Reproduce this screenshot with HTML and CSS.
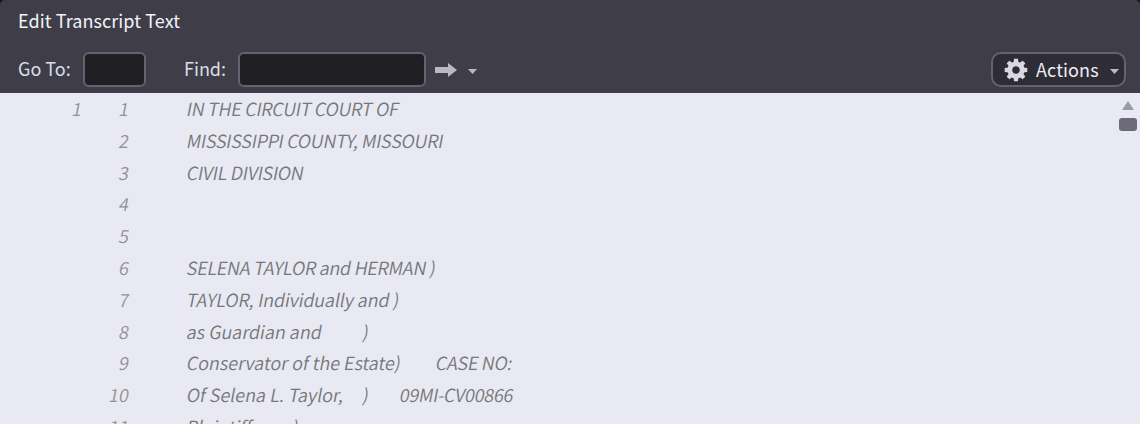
FILE: index.html
```
<!DOCTYPE html>
<html lang="en">
<head>
<meta charset="utf-8">
<title>Edit Transcript Text</title>
<link rel="stylesheet" href="styles.css">
</head>
<body>
<div class="window">
  <header class="header">
    <h1 class="title">Edit Transcript Text</h1>
    <div class="toolbar">
      <label class="label" for="goto">Go To:</label>
      <input class="field field-goto" id="goto" type="text">
      <label class="label label-find" for="find">Find:</label>
      <input class="field field-find" id="find" type="text">
      <svg class="arrow" width="22" height="14" viewBox="0 0 22 14"><path d="M0 4H13V0L22 7L13 14V10H0Z"/></svg>
      <svg class="caret" width="9" height="5" viewBox="0 0 9 5"><path d="M0 0H9L4.5 5Z"/></svg>
      <button class="actions" type="button">
        <svg class="gear" width="24" height="24" viewBox="-12 -12 24 24">
          <path id="teeth" d="M-2.6 -7L-1.9 -11.3H1.9L2.6 -7ZM-2.6 7L-1.9 11.3H1.9L2.6 7Z"/>
          <use href="#teeth" transform="rotate(45)"/>
          <use href="#teeth" transform="rotate(90)"/>
          <use href="#teeth" transform="rotate(135)"/>
          <circle class="ring" r="6.2"/>
        </svg>
        <span>Actions</span>
        <svg class="caret" width="9" height="5" viewBox="0 0 9 5"><path d="M0 0H9L4.5 5Z"/></svg>
      </button>
    </div>
  </header>
  <main class="transcript">
    <div class="lines">
      <div class="line"><span class="page">1</span><span class="num">1</span><span class="text">IN THE CIRCUIT COURT OF</span></div>
      <div class="line"><span class="page"></span><span class="num">2</span><span class="text">MISSISSIPPI COUNTY, MISSOURI</span></div>
      <div class="line"><span class="page"></span><span class="num">3</span><span class="text">CIVIL DIVISION</span></div>
      <div class="line"><span class="page"></span><span class="num">4</span><span class="text"></span></div>
      <div class="line"><span class="page"></span><span class="num">5</span><span class="text"></span></div>
      <div class="line"><span class="page"></span><span class="num">6</span><span class="text">SELENA TAYLOR and HERMAN )</span></div>
      <div class="line"><span class="page"></span><span class="num">7</span><span class="text semi">TAYLOR, Individually and )</span></div>
      <div class="line"><span class="page"></span><span class="num">8</span><span class="text"><span class="party">as Guardian and</span>)</span></div>
      <div class="line"><span class="page"></span><span class="num">9</span><span class="text"><span class="party-wide">Conservator of the Estate)</span>CASE NO:</span></div>
      <div class="line"><span class="page"></span><span class="num">10</span><span class="text"><span class="party">Of Selena L. Taylor,</span><span class="paren">)</span>09MI-CV00866</span></div>
      <div class="line"><span class="page"></span><span class="num">11</span><span class="text"><span class="party-short">Plaintiffs,</span>)</span></div>
    </div>
    <div class="scrollbar">
      <svg class="up" width="12" height="9" viewBox="0 0 12 9"><path d="M0 9L6 0L12 9Z"/></svg>
      <div class="thumb"></div>
    </div>
  </main>
</div>
</body>
</html>
```
FILE: styles.css
```
* { box-sizing: border-box; }
body {
  margin: 0;
  background: #17171a;
  font-family: "Noto Sans CJK SC", "Noto Sans", sans-serif;
}
.window {
  height: 424px;
  display: flex;
  flex-direction: column;
  overflow: hidden;
  border-radius: 5px 5px 0 0;
}
.header {
  height: 93px;
  flex: none;
  padding-left: 18px;
  background: #3f3e48;
}
.title {
  margin: 0;
  padding-top: 6px;
  height: 52px;
  font-size: 18px;
  font-weight: 400;
  line-height: 28px;
  letter-spacing: 0.08px;
  color: #f2f2fa;
}
.toolbar {
  display: flex;
  align-items: center;
  height: 35px;
  padding-right: 14px;
}
.label {
  width: 65px;
  margin-top: -3px;
  font-size: 18px;
  line-height: 28px;
  color: #dcdce6;
}
.label-find { width: 54px; margin-left: 38px; }
.field {
  height: 35px;
  padding: 0 8px;
  border: 2px solid #646270;
  border-radius: 6px;
  background: #202024;
  color: #e8e8f2;
  font: inherit;
}
.field-goto { width: 63px; }
.field-find { width: 188px; }
.arrow { margin-left: 9px; fill: #b9b8c4; }
.caret { margin: 3px 0 0 11px; fill: #b9b8c4; }
.actions {
  display: flex;
  align-items: center;
  width: 135px;
  height: 35px;
  margin-left: auto;
  padding: 0 0 0 11px;
  border: 2px solid #646270;
  border-radius: 10px;
  background: #2e2d36;
  color: #ececf6;
  font: inherit;
  font-size: 18px;
}
.actions span {
  width: 63px;
  margin: -2px 0 0 8px;
  text-align: left;
  letter-spacing: 0.1px;
}
.gear { fill: #d9d9e4; }
.ring { fill: none; stroke: #d9d9e4; stroke-width: 4.8; }
.transcript {
  flex: 1;
  min-height: 0;
  display: flex;
  background: #e8e9f2;
}
.lines {
  flex: 1;
  overflow: hidden;
  font-size: 18px;
  font-weight: 350;
}
.line {
  display: flex;
  height: 31.8px;
  line-height: 31.2px;
  color: #929296;
  white-space: pre;
  transform: skewX(-11deg);
  transform-origin: 0 22px;
}
.page { width: 81px; text-align: right; }
.num { width: 47px; text-align: right; }
.text {
  display: flex;
  margin-left: 58px;
  letter-spacing: -0.27px;
  color: #77777b;
}
.semi { letter-spacing: -0.13px; }
.party, .party-wide, .party-short { letter-spacing: 0; }
.party { width: 176px; }
.party-wide { width: 249px; }
.party-short { width: 106px; }
.paren { width: 37px; }
.scrollbar {
  width: 24px;
  display: flex;
  flex-direction: column;
  align-items: center;
  padding-top: 8px;
}
.up { fill: #9b9b9d; }
.thumb {
  width: 18px;
  height: 13px;
  margin-top: 8px;
  border-radius: 3px;
  background: #6c6a78;
}
```
